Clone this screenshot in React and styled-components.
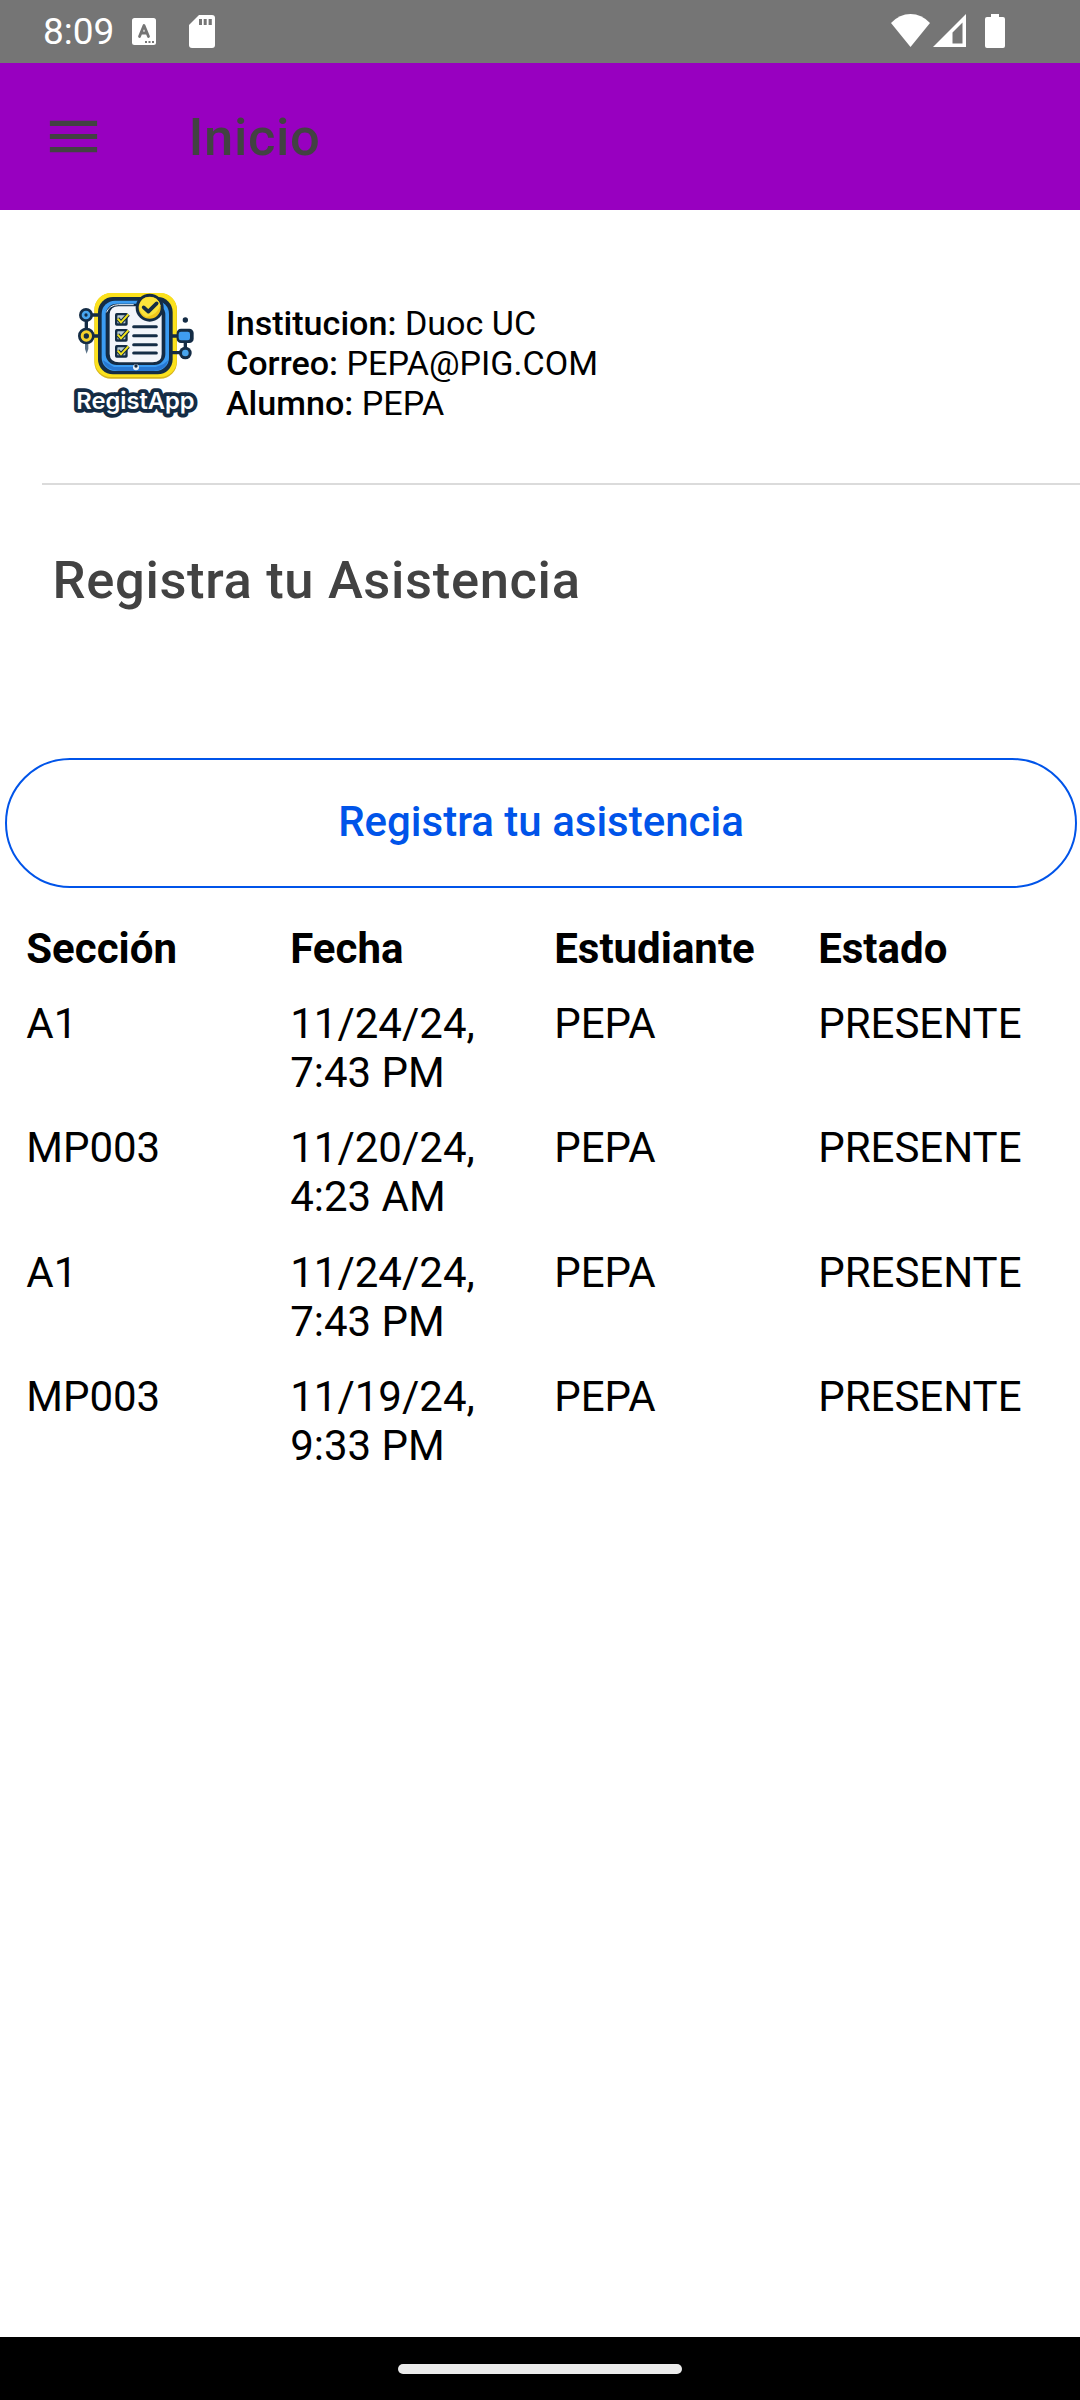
import React from 'react';
import styled, { createGlobalStyle } from 'styled-components';

const GlobalStyle = createGlobalStyle`
  * { box-sizing: border-box; }
  body { margin: 0; background: #fff; }
`;

const Screen = styled.div`
  width: 1080px;
  height: 2400px;
  display: flex;
  flex-direction: column;
  overflow: hidden;
  background: #fff;
  color: #000;
  font-family: Roboto, "Liberation Sans", sans-serif;
  font-size: 42px;
`;

const StatusBar = styled.div`
  height: 63px;
  flex: none;
  display: flex;
  align-items: flex-start;
  justify-content: space-between;
  padding: 0 75px 0 43px;
  background: #757575;
  color: #fff;
`;

const StatusGroup = styled.div`
  display: flex;
  align-items: flex-start;
`;

const Clock = styled.span`
  width: 89px;
  margin-top: 10px;
  font-size: 37px;
  line-height: 43px;
`;

const StatusIcon = styled.svg`
  display: block;
  flex: none;
  width: ${(p) => p.$w}px;
  height: ${(p) => p.$h}px;
  margin-top: ${(p) => p.$top}px;
  margin-left: ${(p) => p.$gap || 0}px;
  fill: #fff;
`;

const Toolbar = styled.header`
  height: 147px;
  flex: none;
  display: flex;
  align-items: center;
  padding-left: 42px;
  background: #9800c0;
  color: #424242;
`;

const MenuButton = styled.button`
  width: 63px;
  height: 63px;
  padding: 0;
  border: 0;
  background: none;
  color: inherit;
`;

const MenuIcon = styled.svg`
  display: block;
  width: 63px;
  height: 63px;
  fill: currentColor;
`;

const Title = styled.h1`
  margin: 0;
  font-size: 52.5px;
  font-weight: 500;
  line-height: 62px;
  letter-spacing: 0.656px;
`;

const ToolbarTitle = styled(Title)`
  margin-left: 83.5px;
`;

const Content = styled.main`
  flex: 1;
  display: flex;
  flex-direction: column;
`;

const Profile = styled.section`
  height: 275px;
  margin-left: 42px;
  padding: 70px 0 0 18px;
  display: flex;
  border-bottom: 2px solid #dbdbdb;
`;

const Logo = styled.svg`
  display: block;
  flex: none;
  width: 150px;
  height: 145px;
`;

const Details = styled.div`
  margin: 23px 0 0 16px;
  font-size: 34.125px;
  line-height: 40px;
`;

const Detail = styled.div`
  strong { font-weight: 500; }
`;

const SectionTitle = styled(Title)`
  margin: 64px 0 0 52.5px;
  color: #424242;
`;

const OutlineButton = styled.button`
  height: 130px;
  margin: 147px 3px 0 5px;
  padding: 0 0 4px;
  border: 2px solid #0054e9;
  border-radius: 65px;
  background: transparent;
  color: #0054e9;
  font-family: inherit;
  font-size: 42px;
  font-weight: 500;
`;

const Grid = styled.div`
  margin-top: 10px;
  padding: 13.125px 11px 13.125px 13.125px;
`;

const Row = styled.div`
  display: grid;
  grid-template-columns: repeat(4, 1fr);
  height: ${(p) => (p.$head ? 74.35 : 124.5)}px;
  font-weight: ${(p) => (p.$head ? 700 : 400)};
`;

const Cell = styled.div`
  padding: 13.125px 13.125px 0;
  line-height: 49px;
`;

const NavBar = styled.footer`
  height: 63px;
  flex: none;
  display: flex;
  align-items: flex-start;
  justify-content: center;
  padding-top: 27px;
  background: #000;
`;

const Handle = styled.div`
  width: 284px;
  height: 10px;
  border-radius: 5px;
  background: #ebebeb;
`;

const rows = [
  ['A1', '11/24/24, 7:43 PM', 'PEPA', 'PRESENTE'],
  ['MP003', '11/20/24, 4:23 AM', 'PEPA', 'PRESENTE'],
  ['A1', '11/24/24, 7:43 PM', 'PEPA', 'PRESENTE'],
  ['MP003', '11/19/24, 9:33 PM', 'PEPA', 'PRESENTE'],
];

const NAVY = '#142c45';

function AppLogo() {
  return (
    <Logo viewBox="0 0 450 435">
      <path d="M79 105V190M376 168V218" stroke={NAVY} strokeWidth="10" />
      <path d="M75 185h10v22l-5 14-5-14z" fill="#587086" />
      <rect x="103" y="40" width="248" height="256" rx="50" fill="#d8b51c" />
      <rect x="104" y="39" width="246" height="252" rx="48" fill="#fbe11d" />
      <path d="M84 105h36M84 168h36M330 168h30M330 218h36" stroke={NAVY} strokeWidth="10" />
      <rect x="114" y="51" width="224" height="232" rx="45" fill={NAVY} />
      <rect x="125" y="62" width="202" height="211" rx="40" fill="#3b9cf2" />
      <path d="M128 240q8 31 48 33h105q36-2 44-33l-14 12-24 9H162z" fill="#2878d2" />
      <rect x="137" y="71" width="179" height="184" rx="33" fill={NAVY} />
      <path d="M149 102q2-22 26-23h70v24h60v119q0 25-27 25h-101q-27 0-28-25z" fill="#f3f5fa" />
      <path d="M140 96q8-21 35-22h45" fill="none" stroke="#e6f1fb" strokeWidth="3" strokeLinecap="round" />
      <circle cx="228" cy="262" r="9" fill="#e9f0f7" />
      <circle cx="228" cy="258" r="5" fill={NAVY} />
      {[117, 165, 213].map((y) => (
        <g key={y}>
          <rect x="165" y={y - 18} width="38" height="38" rx="5" fill={NAVY} />
          <rect x="172" y={y - 11} width="24" height="24" rx="2" fill="#b9cbd2" />
          <path d={`M173 ${y - 1}l10 11 22-24`} fill="none" stroke={NAVY} strokeWidth="12" />
          <path d={`M173 ${y - 1}l10 11 22-24`} fill="none" stroke="#f4e51b" strokeWidth="6" />
        </g>
      ))}
      <path d="M221 140h68M221 167h68M221 194h68M221 219h68" stroke={NAVY} strokeWidth="9" strokeLinecap="round" />
      <circle cx="269" cy="83" r="42" fill={NAVY} />
      <circle cx="269" cy="83" r="33" fill="#f2c51b" />
      <path d="M237 80q4-29 32-29 26 0 32 25-7 27-41 35-21-9-23-31z" fill="#fbe33b" />
      <path d="M251 82l14 13 25-25" fill="none" stroke={NAVY} strokeWidth="11" strokeLinecap="round" strokeLinejoin="round" />
      <circle cx="78" cy="105" r="21" fill={NAVY} />
      <circle cx="78" cy="105" r="13" fill="#48a5ee" />
      <circle cx="78" cy="105" r="5" fill={NAVY} />
      <circle cx="79" cy="168" r="25" fill={NAVY} />
      <circle cx="79" cy="168" r="17" fill="#f5d12c" />
      <circle cx="79" cy="168" r="8" fill={NAVY} />
      <rect x="350" y="146" width="51" height="43" rx="13" fill={NAVY} />
      <rect x="356" y="155" width="34" height="26" rx="7" fill="#3f9df2" />
      <circle cx="376" cy="219" r="19" fill={NAVY} />
      <circle cx="376" cy="219" r="10" fill="#48a5ee" />
      <circle cx="376" cy="120" r="8" fill={NAVY} />
      <text
        x="49"
        y="386"
        textLength="355"
        lengthAdjust="spacingAndGlyphs"
        fontFamily='Inter, "Open Sans", sans-serif'
        fontSize="70"
        fontWeight="600"
        fill="#fff"
        stroke={NAVY}
        strokeWidth="23"
        strokeLinejoin="round"
        paintOrder="stroke"
      >
        RegistApp
      </text>
    </Logo>
  );
}

export default function App() {
  return (
    <Screen>
      <GlobalStyle />
      <StatusBar>
        <StatusGroup>
          <Clock>8:09</Clock>
          <StatusIcon viewBox="0 0 24 27" $w={24} $h={27} $top={18}>
            <rect width="24" height="27" rx="2.5" />
            <path d="M7.5 18.5L12 7.5l4.5 11M9.3 15h5.4" fill="none" stroke="#757575" strokeWidth="2.8" strokeLinecap="round" strokeLinejoin="round" />
            <path d="M13 23h2v2h-2zM16.5 23h2v2h-2zM20 23h2v2h-2z" fill="#757575" />
          </StatusIcon>
          <StatusIcon viewBox="0 0 26 33" $w={26} $h={33} $top={15} $gap={33}>
            <path d="M10 0h13a3 3 0 0 1 3 3v27a3 3 0 0 1-3 3H3a3 3 0 0 1-3-3V10z" />
            <path d="M10 4h3v6h-3zM14.7 4h3v6h-3zM19.6 4h3.2v6h-3.2z" fill="#757575" />
          </StatusIcon>
        </StatusGroup>
        <StatusGroup>
          <StatusIcon viewBox="0 0 39 33" $w={39} $h={33} $top={14}>
            <path d="M0 9Q8.5 0 19.5 0T39 9L19.5 33z" />
          </StatusIcon>
          <StatusIcon viewBox="0 0 33 33" $w={33} $h={33} $top={14} $gap={3}>
            <path fillRule="evenodd" d="M33 0v33H0zM29.5 8.5l-10 10V29.5h10z" />
          </StatusIcon>
          <StatusIcon viewBox="0 0 20 34" $w={20} $h={34} $top={14} $gap={19}>
            <path d="M6 0h8v3h4a2 2 0 0 1 2 2v27a2 2 0 0 1-2 2H2a2 2 0 0 1-2-2V5a2 2 0 0 1 2-2h4z" />
          </StatusIcon>
        </StatusGroup>
      </StatusBar>

      <Toolbar>
        <MenuButton aria-label="Menu">
          <MenuIcon viewBox="0 0 512 512">
            <path d="M64 384h384v-42.67H64zm0-106.67h384v-42.66H64zM64 128v42.67h384V128z" />
          </MenuIcon>
        </MenuButton>
        <ToolbarTitle>Inicio</ToolbarTitle>
      </Toolbar>

      <Content>
        <Profile>
          <AppLogo />
          <Details>
            <Detail><strong>Institucion:</strong> Duoc UC</Detail>
            <Detail><strong>Correo:</strong> PEPA@PIG.COM</Detail>
            <Detail><strong>Alumno:</strong> PEPA</Detail>
          </Details>
        </Profile>
        <SectionTitle as="h2">Registra tu Asistencia</SectionTitle>
        <OutlineButton>Registra tu asistencia</OutlineButton>
        <Grid>
          <Row $head>
            {['Sección', 'Fecha', 'Estudiante', 'Estado'].map((h) => (
              <Cell key={h}>{h}</Cell>
            ))}
          </Row>
          {rows.map((row, i) => (
            <Row key={i}>
              {row.map((value, j) => (
                <Cell key={j}>{value}</Cell>
              ))}
            </Row>
          ))}
        </Grid>
      </Content>

      <NavBar>
        <Handle />
      </NavBar>
    </Screen>
  );
}
